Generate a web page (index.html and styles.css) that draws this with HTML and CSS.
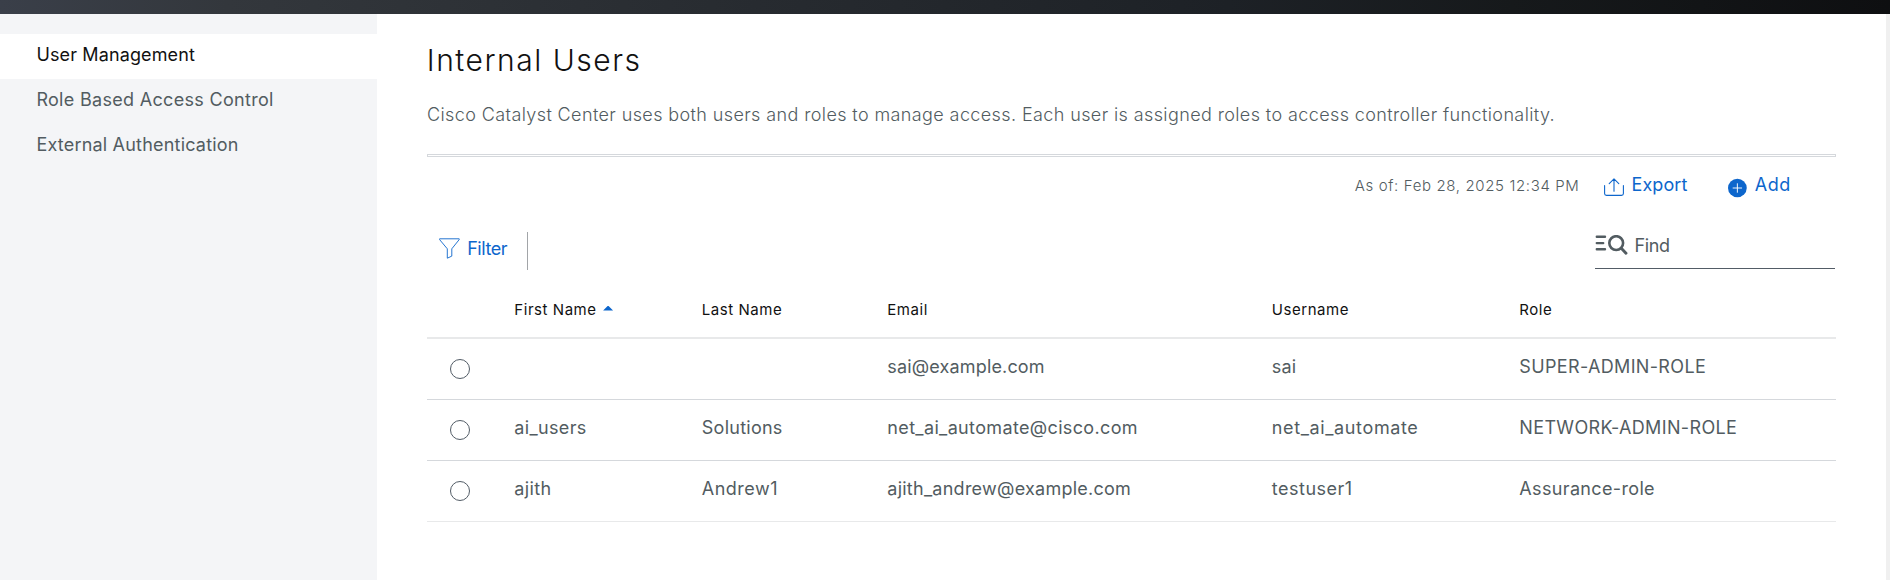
FILE: index.html
```
<!DOCTYPE html>
<html lang="en">
<head>
<meta charset="utf-8">
<title>Internal Users</title>
<link rel="stylesheet" href="styles.css">
</head>
<body>
<div class="topbar"></div>
<div class="layout">
  <nav class="sidebar">
    <a class="nav-item nav-active">User Management</a>
    <a class="nav-item nav-rbac">Role Based Access Control</a>
    <a class="nav-item">External Authentication</a>
  </nav>
  <main class="content">
    <h1 class="title">Internal Users</h1>
    <p class="subtitle">Cisco Catalyst Center uses both users and roles to manage access. Each user is assigned roles to access controller functionality.</p>
    <div class="divider"></div>
    <div class="actions">
      <span class="as-of">As of: Feb 28, 2025 12:34 PM</span>
      <button class="action export">
        <svg class="icon-export" width="20" height="18" viewBox="0 0 20 18" fill="none" stroke="currentColor" stroke-width="1.1" stroke-linecap="round" stroke-linejoin="round"><path d="M.6 7.5v8q0 1.9 1.9 1.9h15q1.9 0 1.9-1.9v-8M10 13.2V1M5.2 5.6 10 .8l4.8 4.8"/></svg>
        <span>Export</span>
      </button>
      <button class="action add">
        <svg class="icon-add" width="20" height="20" viewBox="0 0 20 20"><circle cx="10" cy="10" r="10" fill="currentColor"/><path d="M10 5v10M5 10h10" stroke="#fff" stroke-width="1"/></svg>
        <span>Add</span>
      </button>
    </div>
    <div class="toolbar">
      <button class="action filter">
        <svg width="21" height="21" viewBox="0 0 21 21" fill="none" stroke="currentColor" stroke-width=".9" stroke-linejoin="round"><path d="M.6.8h19.6v.8l-7.4 9.2v7.3L8.3 20.2v-9.4L.6 1.6z"/></svg>
        <span>Filter</span>
      </button>
      <div class="find">
        <svg width="33" height="21" viewBox="0 0 33 21" fill="none" stroke="currentColor" stroke-width="2.4" stroke-linecap="round"><path d="M1.8 1.8h8.2M1.8 8.1h6.4M1.8 14.3h8.2"/><circle cx="21.2" cy="8.1" r="6.9" stroke-width="2.6"/><path d="m26.3 13.2 4.7 5" stroke-width="2.9"/></svg>
        <span class="find-text">Find</span>
      </div>
    </div>
    <div class="table">
      <div class="row head">
        <span></span>
        <span class="sorted">First Name<i class="sort-up"></i></span><span>Last Name</span><span>Email</span><span>Username</span><span>Role</span>
      </div>
      <div class="row">
        <i class="radio"></i><span></span><span></span><span class="email-short">sai@example.com</span><span class="email-short">sai</span><span>SUPER-ADMIN-ROLE</span>
      </div>
      <div class="row">
        <i class="radio"></i><span>ai_users</span><span class="last">Solutions</span><span>net_ai_automate@cisco.com</span><span class="user">net_ai_automate</span><span>NETWORK-ADMIN-ROLE</span>
      </div>
      <div class="row">
        <i class="radio"></i><span>ajith</span><span class="wide">Andrew1</span><span class="last">ajith_andrew@example.com</span><span class="wide">testuser1</span><span>Assurance-role</span>
      </div>
    </div>
  </main>
</div>
</body>
</html>
```
FILE: styles.css
```
* { box-sizing: border-box; }
html, body { margin: 0; height: 580px; overflow: hidden; }
body {
  font: 400 18px/22px Inter, sans-serif;
  color: #525c61;
  background: #fff;
}
.topbar { height: 14px; background: linear-gradient(90deg, #3a3f49 0%, #33373c 12%, #272b30 40%, #1d2126 65%, #16191b 80%, #0e0f11 100%); }
.layout { display: flex; height: 566px; border-right: 4px solid #f0f0f0; }

.sidebar { width: 377px; padding-top: 20px; background: #f4f5f7; }
.nav-item { display: flex; align-items: center; height: 45px; padding: 0 0 3px 36.4px; letter-spacing: .2px; }
.nav-active { background: #fff; color: #111; letter-spacing: .13px; }
.nav-rbac { letter-spacing: .31px; }

.content { width: 1409px; margin-left: 50px; }
.title { margin: 28px 0 0 -.2px; font-size: 30px; line-height: 36px; font-weight: 300; letter-spacing: 1.52px; color: #111; }
.subtitle { margin: 25.5px 0 0 0; font-weight: 300; letter-spacing: .39px; white-space: nowrap; }
.divider { height: 3px; margin-top: 28.5px; border: 1px solid #d5d8dc; }

.actions { display: flex; height: 63px; padding: 17px 45px 0 0; justify-content: flex-end; align-items: flex-start; }
.as-of { padding-top: 1px; margin-right: 24.5px; font-size: 15px; line-height: 22px; font-weight: 300; letter-spacing: .63px; }
.action { display: flex; align-items: flex-start; padding: 0; border: 0; background: none; font: inherit; color: #0d66cc; }
.export { width: 124px; gap: 7.5px; letter-spacing: .1px; }
.icon-export { margin-top: 4px; }
.add { width: 63px; gap: 8px; letter-spacing: .6px; }
.icon-add { margin-top: 4px; }

.toolbar { display: flex; justify-content: space-between; height: 60px; padding-top: 12px; }
.filter { width: 101px; height: 38px; padding: 6px 0 0 12px; gap: 7.2px; border-right: 1px solid #a2a5a8; letter-spacing: -.44px; }
.find { display: flex; width: 240px; height: 37px; margin-right: 1px; padding-top: 3px; gap: 6.5px; border-bottom: 1px solid #525c66; letter-spacing: -.35px; }

.row { display: grid; grid-template-columns: 87.3px 187.5px 185.5px 384.5px 247.5px 1fr; align-items: center; height: 61px; border-bottom: 1px solid #d5d8dc; letter-spacing: .35px; }
.row > span { padding-bottom: 5px; white-space: nowrap; }
.row:last-child { border-color: #e8e9ea; }
.head { height: 59px; border-bottom: 2px solid #e8e9ea; font-size: 15px; letter-spacing: .55px; color: #111; }
.head > span { padding: 2px 0 0; }
.sorted { display: flex; align-items: center; gap: 6.5px; }
.sort-up { width: 10px; height: 5px; margin-top: -3px; background: #0d66cc; clip-path: polygon(50% 0, 100% 100%, 0 100%); }
.radio { width: 20px; height: 20px; margin-left: 23px; border: 1px solid #525c66; border-radius: 50%; }
.row .email-short { letter-spacing: .16px; }
.row .last { letter-spacing: .25px; }
.row .wide { letter-spacing: .5px; }
.row .user { letter-spacing: .63px; }
```
